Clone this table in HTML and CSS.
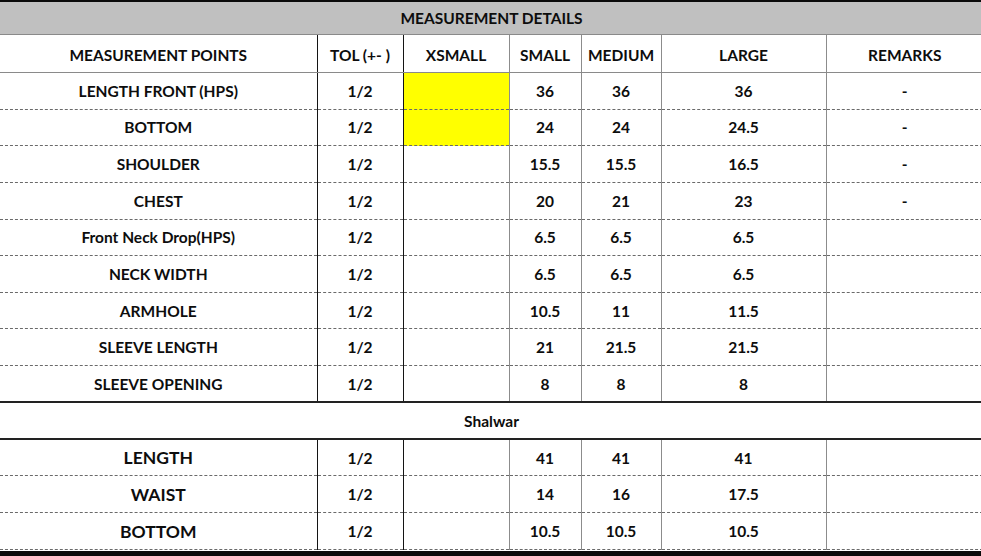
FILE: index.html
```html
<!DOCTYPE html>
<html>
<head>
<meta charset="utf-8">
<link rel="stylesheet" href="styles.css">
</head>
<body>
<div class="sheet">
  <table class="spec">
    <colgroup>
      <col class="c-point"><col class="c-tol"><col class="c-xs"><col class="c-s"><col class="c-m"><col class="c-l"><col class="c-rem">
    </colgroup>
    <thead>
      <tr class="title"><th colspan="7">MEASUREMENT DETAILS</th></tr>
      <tr class="heads">
        <th class="dk">MEASUREMENT POINTS</th>
        <th class="dk">TOL (+- )</th>
        <th>XSMALL</th>
        <th>SMALL</th>
        <th>MEDIUM</th>
        <th>LARGE</th>
        <th>REMARKS</th>
      </tr>
    </thead>
    <tbody>
      <tr><td class="dk">LENGTH FRONT (HPS)</td><td class="dk">1/2</td><td class="yel"></td><td>36</td><td>36</td><td>36</td><td>-</td></tr>
      <tr><td class="dk">BOTTOM</td><td class="dk">1/2</td><td class="yel"></td><td>24</td><td>24</td><td>24.5</td><td>-</td></tr>
      <tr><td class="dk">SHOULDER</td><td class="dk">1/2</td><td></td><td>15.5</td><td>15.5</td><td>16.5</td><td>-</td></tr>
      <tr><td class="dk">CHEST</td><td class="dk">1/2</td><td></td><td>20</td><td>21</td><td>23</td><td>-</td></tr>
      <tr><td class="dk">Front Neck Drop(HPS)</td><td class="dk">1/2</td><td></td><td>6.5</td><td>6.5</td><td>6.5</td><td></td></tr>
      <tr><td class="dk">NECK WIDTH</td><td class="dk">1/2</td><td></td><td>6.5</td><td>6.5</td><td>6.5</td><td></td></tr>
      <tr><td class="dk">ARMHOLE</td><td class="dk">1/2</td><td></td><td>10.5</td><td>11</td><td>11.5</td><td></td></tr>
      <tr><td class="dk">SLEEVE LENGTH</td><td class="dk">1/2</td><td></td><td>21</td><td>21.5</td><td>21.5</td><td></td></tr>
      <tr class="last"><td class="dk">SLEEVE OPENING</td><td class="dk">1/2</td><td></td><td>8</td><td>8</td><td>8</td><td></td></tr>
      <tr class="section"><td colspan="7">Shalwar</td></tr>
      <tr class="big"><td class="dk">LENGTH</td><td class="dk">1/2</td><td></td><td>41</td><td>41</td><td>41</td><td></td></tr>
      <tr class="big"><td class="dk">WAIST</td><td class="dk">1/2</td><td></td><td>14</td><td>16</td><td>17.5</td><td></td></tr>
      <tr class="big"><td class="dk">BOTTOM</td><td class="dk">1/2</td><td></td><td>10.5</td><td>10.5</td><td>10.5</td><td></td></tr>
    </tbody>
  </table>
  <div class="bottombar"></div>
</div>
</body>
</html>
```

FILE: styles.css
```css
html, body {
  margin: 0;
  padding: 0;
  background: #ffffff;
}
.sheet {
  width: 981px;
  height: 556px;
  overflow: hidden;
  border-top: 2px solid #0a0a0a;
  box-sizing: border-box;
  display: flex;
  flex-direction: column;
}
.spec {
  border-collapse: collapse;
  table-layout: fixed;
  width: 983px;
  font-family: Lato, "Open Sans", sans-serif;
  font-weight: 700;
  font-size: 15.5px;
  color: #0d0d0d;
}
.c-point { width: 317px; }
.c-tol { width: 86px; }
.c-xs { width: 106px; }
.c-s { width: 72px; }
.c-m { width: 80px; }
.c-l { width: 165px; }
.c-rem { width: 157px; }
.spec th, .spec td {
  padding: 0;
  text-align: center;
  vertical-align: middle;
  font-weight: 700;
  border-left: 1px solid #8c8c8c;
  border-bottom: 1px dashed #6a6a6a;
}
.spec th:first-child, .spec td:first-child {
  border-left: none;
}
.spec .dk + .dk, .spec .dk + td, .spec .dk + th {
  border-left-color: #141414;
}
.title th {
  background: #c0c0c0;
  height: 32px;
  border-bottom: 1px solid #8a8a8a;
}
.heads th {
  height: 35px;
  padding-top: 2px;
  border-bottom: 1px solid #8a8a8a;
}
.spec tbody tr { height: 36.65px; }
.spec td.yel { background: #ffff00; }
.spec tr.last td { border-bottom: 2px solid #222222; }
.spec tr.section td {
  height: 34px;
  border-left: none;
  border-bottom: 2px solid #222222;
}
.spec tr.big { height: 36.9px; }
.spec tr.big td:first-child { font-size: 17.5px; }
.bottombar {
  margin-top: auto;
  height: 5px;
  background: #0a0a0a;
}
```
